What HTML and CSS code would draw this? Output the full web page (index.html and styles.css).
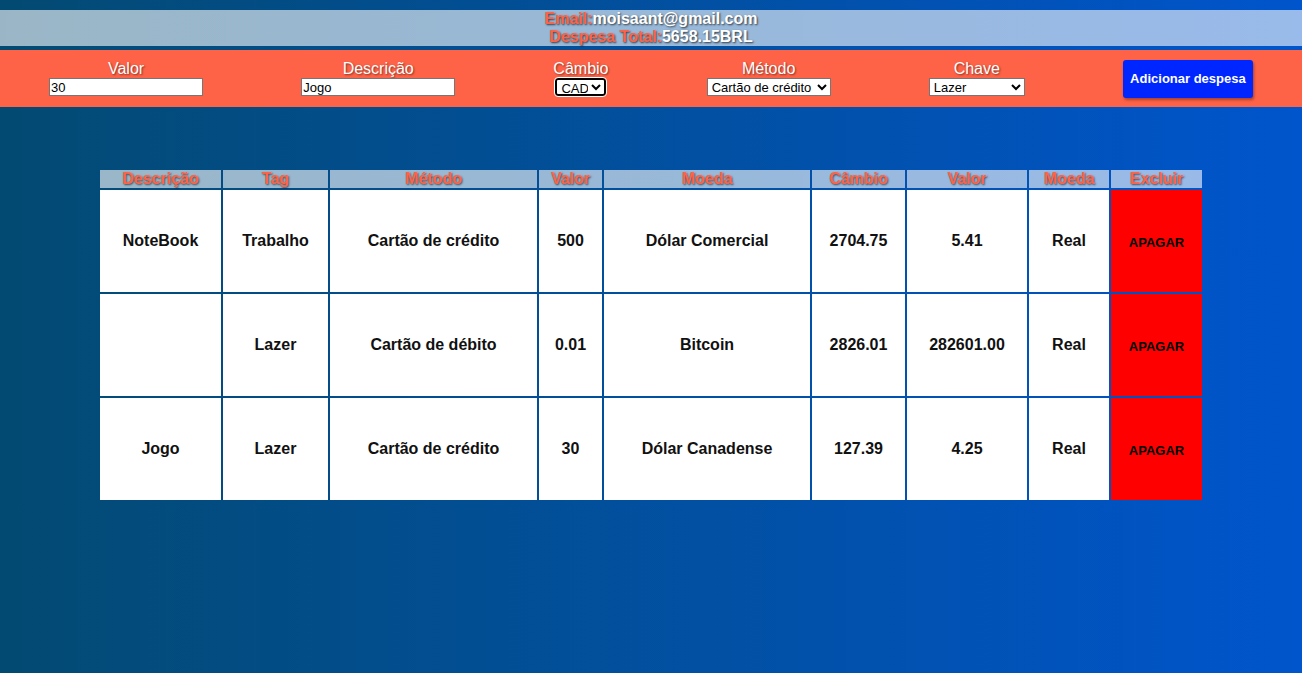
FILE: index.html
```html
<!DOCTYPE html>
<html lang="pt">
<head>
<meta charset="utf-8">
<title>Wallet</title>
<link rel="stylesheet" href="styles.css">
</head>
<body>
<header class="top">
  <p class="line"><span class="key">Email:</span><span class="val">moisaant@gmail.com</span></p>
  <p class="line"><span class="key">Despesa Total:</span><span class="val">5658.15BRL</span></p>
</header>
<form class="form">
  <label class="field"><span class="lbl">Valor</span><input class="inp" type="text" value="30"></label>
  <label class="field"><span class="lbl">Descrição</span><input class="inp" type="text" value="Jogo"></label>
  <label class="field"><span class="lbl">Câmbio</span><select class="sel sel-cad"><option>CAD</option></select></label>
  <label class="field"><span class="lbl">Método</span><select class="sel sel-met"><option>Cartão de crédito</option></select></label>
  <label class="field"><span class="lbl">Chave</span><select class="sel sel-tag"><option>Lazer</option></select></label>
  <button class="add" type="button">Adicionar despesa</button>
</form>
<table class="tbl">
  <colgroup>
    <col class="c1"><col class="c2"><col class="c3"><col class="c4"><col class="c5"><col class="c6"><col class="c7"><col class="c8"><col class="c9">
  </colgroup>
  <thead>
    <tr><th>Descrição</th><th>Tag</th><th>Método</th><th>Valor</th><th>Moeda</th><th>Câmbio</th><th>Valor</th><th>Moeda</th><th>Excluir</th></tr>
  </thead>
  <tbody>
    <tr><td>NoteBook</td><td>Trabalho</td><td>Cartão de crédito</td><td>500</td><td>Dólar Comercial</td><td>2704.75</td><td>5.41</td><td>Real</td><td class="del"><button class="del-btn" type="button">APAGAR</button></td></tr>
    <tr><td></td><td>Lazer</td><td>Cartão de débito</td><td>0.01</td><td>Bitcoin</td><td>2826.01</td><td>282601.00</td><td>Real</td><td class="del"><button class="del-btn" type="button">APAGAR</button></td></tr>
    <tr><td>Jogo</td><td>Lazer</td><td>Cartão de crédito</td><td>30</td><td>Dólar Canadense</td><td>127.39</td><td>4.25</td><td>Real</td><td class="del"><button class="del-btn" type="button">APAGAR</button></td></tr>
  </tbody>
</table>
</body>
</html>
```
FILE: styles.css
```css
html, body {
  margin: 0;
  height: 100%;
}
body {
  background: linear-gradient(to right, #034a72, #0055cc);
  font-family: "Liberation Sans", Arial, sans-serif;
  padding-top: 10px;
  box-sizing: border-box;
}
.top {
  background: rgba(255, 255, 255, 0.6);
  text-align: center;
  height: 36px;
}
.line {
  margin: 0;
  font-size: 16px;
  line-height: 18px;
  font-weight: bold;
  text-shadow: 1px 1px 2px rgba(0, 0, 0, 0.7);
}
.key { color: #ff6347; }
.val { color: #fff; }

.form {
  margin-top: 4px;
  background: #ff6347;
  height: 57px;
  display: flex;
  justify-content: space-around;
  align-items: center;
}
.field {
  display: flex;
  flex-direction: column;
  align-items: center;
  padding-bottom: 1px;
}
.lbl {
  color: #fff;
  font-size: 16px;
  line-height: 18px;
  text-shadow: 1px 1px 2px rgba(0, 0, 0, 0.5);
}
.inp {
  box-sizing: border-box;
  width: 154px;
  height: 18px;
  margin: 0;
  padding: 0 1px;
  border: 1px solid #767676;
  font-family: "Liberation Sans", Arial, sans-serif;
  font-size: 13px;
  background: #fff;
  color: #000;
}
.sel {
  box-sizing: border-box;
  height: 18px;
  margin: 0;
  padding: 0;
  border: 1px solid #767676;
  border-radius: 0;
  font-family: "Liberation Sans", Arial, sans-serif;
  font-size: 13px;
  background: #fff;
  color: #000;
}
.sel-cad {
  width: 51px;
  border: 2px solid #000;
  border-radius: 3px;
  outline: 1px solid #fff;
}
.sel-met { width: 124px; }
.sel-tag { width: 96px; }
.add {
  width: 130px;
  height: 38px;
  border: none;
  border-radius: 3px;
  background: #0026ff;
  color: #fff;
  font-family: "Liberation Sans", Arial, sans-serif;
  font-size: 13px;
  font-weight: bold;
  box-shadow: 1px 2px 3px rgba(0, 0, 0, 0.35);
}

.tbl {
  margin: 61px auto 0;
  border-spacing: 2px;
  table-layout: fixed;
  width: 1106px;
}
.c1 { width: 121px; }
.c2 { width: 105px; }
.c3 { width: 207px; }
.c4 { width: 63px; }
.c5 { width: 206px; }
.c6 { width: 93px; }
.c7 { width: 120px; }
.c8 { width: 80px; }
.c9 { width: 91px; }
.tbl th {
  background: rgba(255, 255, 255, 0.6);
  color: #ff6347;
  font-size: 16px;
  line-height: 18px;
  height: 18px;
  padding: 0;
  font-weight: bold;
  text-shadow: 1px 1px 2px rgba(0, 0, 0, 0.6);
}
.tbl td {
  background: #fff;
  height: 102px;
  padding: 0;
  text-align: center;
  font-size: 16px;
  font-weight: bold;
  color: #111;
}
.tbl td.del {
  background: #ff0000;
}
.del-btn {
  background: transparent;
  border: none;
  font-family: "Liberation Sans", Arial, sans-serif;
  font-size: 13px;
  font-weight: bold;
  color: #000;
  padding: 0;
  margin-top: 4px;
}
```
